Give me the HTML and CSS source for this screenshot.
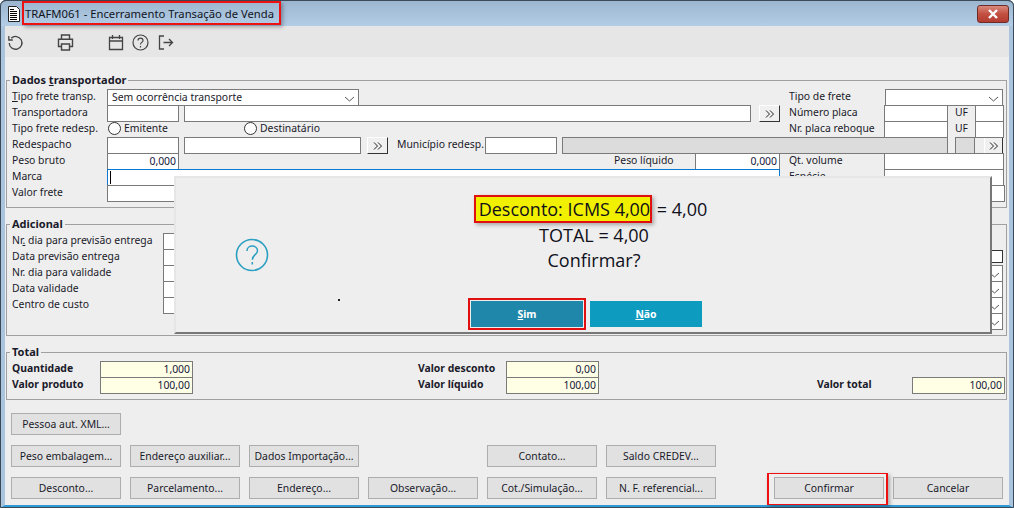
FILE: index.html
```html
<!DOCTYPE html>
<html lang="pt-BR">
<head>
<meta charset="utf-8">
<title>TRAFM061</title>
<link rel="stylesheet" href="styles.css">
</head>
<body>
<div class="window">
  <header class="titlebar">
    <svg class="doc-icon" width="14" height="16" viewBox="0 0 14 16"><path d="M1.500.5h8l3 3v12h-11z" fill="#fff" stroke="#222"/><path d="M3 3.500h4M3 5.500h7M3 7.500h7M3 9.500h7M3 11.500h7M3 13.500h7" stroke="#000"/></svg>
    <h1 class="title">TRAFM061 - Encerramento Transação de Venda</h1>
    <button class="close" aria-label="Fechar"><svg width="12" height="10" viewBox="0 0 12 10"><path d="M2 1l8 8M10 1L2 9" stroke="#fff" stroke-width="2.4"/></svg></button>
  </header>
  <nav class="toolbar">
    <svg class="tool t-undo" width="17" height="17" viewBox="0 0 17 17"><path d="M4.200 4.200A6.400 6.400 0 1 1 2.200 9M1.800 2v4h4" fill="none" stroke="#444" stroke-width="1.3"/></svg>
    <svg class="tool t-print" width="17" height="17" viewBox="0 0 17 17"><path d="M4.500 5V1h8v4M4 12.500H1.500V5.200h14v7.300H13M4.500 10h8v6h-8z" fill="none" stroke="#444" stroke-width="1.400"/></svg>
    <svg class="tool t-cal" width="16" height="17" viewBox="0 0 16 17"><path d="M1.500 3.500h13v12h-13zM1.500 7h13M4.500 1v4M11.500 1v4" fill="none" stroke="#444" stroke-width="1.300"/></svg>
    <svg class="tool t-help" width="17" height="17" viewBox="0 0 17 17"><circle cx="8.500" cy="8.500" r="7.500" fill="none" stroke="#444" stroke-width="1.200"/><path d="M6 6.500c0-3.200 5-3.200 5 0 0 1.900-2.500 1.900-2.500 4M8.500 12v1.400" fill="none" stroke="#444" stroke-width="1.200"/></svg>
    <svg class="tool t-exit" width="16" height="17" viewBox="0 0 16 17"><path d="M6 2H1.500v13H6M5.500 8.500h9M11 5l3.500 3.500L11 12" fill="none" stroke="#444" stroke-width="1.300"/></svg>
  </nav>
  <main class="content">
    <fieldset class="group g-dados">
      <legend>Dados <u>t</u>ransportador</legend>
      <div class="row">
        <label class="lb c-label"><u>T</u>ipo frete transp.</label>
        <div class="in combo w-tipo">Sem ocorrência transporte<svg class="chev" width="11" height="6" viewBox="0 0 11 6"><path d="M1 1l4.500 4L10 1" fill="none" stroke="#555"/></svg></div>
        <label class="lb c-tipofrete">Tipo de frete</label>
        <div class="in combo w-tf"><svg class="chev" width="11" height="6" viewBox="0 0 11 6"><path d="M1 1l4.500 4L10 1" fill="none" stroke="#555"/></svg></div>
      </div>
      <div class="row">
        <label class="lb c-label">Transportadora</label>
        <div class="in w-code"></div>
        <div class="in w-transp"></div>
        <button class="more m-transp" aria-label="Mais"><svg width="10" height="8" viewBox="0 0 10 8"><path d="M1 .5l3.500 3.500L1 7.500M5 .5L8.500 4 5 7.500" fill="none" stroke="#222"/></svg></button>
        <label class="lb c-placa">Número placa</label>
        <div class="in w-placa"></div>
        <span class="uf">UF</span>
        <div class="in w-uf"></div>
      </div>
      <div class="row">
        <label class="lb c-label">Tipo frete redesp.</label>
        <span class="radio"></span><label class="lb c-emit">Emitente</label>
        <span class="radio"></span><label class="lb c-dest">Destinatário</label>
        <label class="lb c-reboque">Nr. placa reboque</label>
        <div class="in w-placa"></div>
        <span class="uf">UF</span>
        <div class="in w-uf"></div>
      </div>
      <div class="row">
        <label class="lb c-label">Redespacho</label>
        <div class="in w-code"></div>
        <div class="in w-redesp"></div>
        <button class="more m-red" aria-label="Mais"><svg width="10" height="8" viewBox="0 0 10 8"><path d="M1 .5l3.500 3.500L1 7.500M5 .5L8.500 4 5 7.500" fill="none" stroke="#222"/></svg></button>
        <label class="lb c-mun">Município redesp.</label>
        <div class="in w-code"></div>
        <div class="in off w-off"></div>
        <div class="in off w-off2"></div>
        <button class="more m-end" aria-label="Mais"><svg width="10" height="8" viewBox="0 0 10 8"><path d="M1 .5l3.500 3.500L1 7.500M5 .5L8.500 4 5 7.500" fill="none" stroke="#222"/></svg></button>
      </div>
      <div class="row">
        <label class="lb c-label">Peso bruto</label>
        <div class="in num w-code">0,000</div>
        <label class="lb c-liq">Peso líquido</label>
        <div class="in num w-liq">0,000</div>
        <label class="lb c-vol">Qt. volume</label>
        <div class="in w-right"></div>
      </div>
      <div class="row">
        <label class="lb c-label">Marca</label>
        <div class="in focus w-marca"><i class="caret"></i></div>
        <label class="lb c-vol">Espécie</label>
        <div class="in w-right"></div>
      </div>
      <div class="row">
        <label class="lb c-label">Valor frete</label>
        <div class="in w-code"></div>
        <div class="in w-right push"></div>
      </div>
    </fieldset>

    <fieldset class="group g-adic">
      <legend>Adicional</legend>
      <div class="row"><label class="lb c-adic">Nr<u>.</u> dia para previsão entrega</label><div class="in w-code"></div></div>
      <div class="row"><label class="lb c-adic">Data previsão entrega</label><div class="in w-code"></div><span class="check push"></span></div>
      <div class="row"><label class="lb c-adic">Nr. dia para validade</label><div class="in w-code"></div><div class="in combo w-mini push"><svg class="chev" width="11" height="6" viewBox="0 0 11 6"><path d="M1 1l4.500 4L10 1" fill="none" stroke="#555"/></svg></div></div>
      <div class="row"><label class="lb c-adic">Data validade</label><div class="in w-code"></div><div class="in combo w-mini push"><svg class="chev" width="11" height="6" viewBox="0 0 11 6"><path d="M1 1l4.500 4L10 1" fill="none" stroke="#555"/></svg></div></div>
      <div class="row"><label class="lb c-adic">Centro de custo</label><div class="in w-code"></div><div class="in combo w-mini push"><svg class="chev" width="11" height="6" viewBox="0 0 11 6"><path d="M1 1l4.500 4L10 1" fill="none" stroke="#555"/></svg></div></div>
      <div class="row"><div class="in combo w-mini push"><svg class="chev" width="11" height="6" viewBox="0 0 11 6"><path d="M1 1l4.500 4L10 1" fill="none" stroke="#555"/></svg></div></div>
    </fieldset>

    <fieldset class="group g-total">
      <legend>Total</legend>
      <div class="row">
        <label class="lb strong c-tot">Quantidade</label>
        <div class="in num cream w-tot">1,000</div>
        <label class="lb strong c-desc">Valor desconto</label>
        <div class="in num cream w-tot">0,00</div>
      </div>
      <div class="row">
        <label class="lb strong c-tot">Valor produto</label>
        <div class="in num cream w-tot">100,00</div>
        <label class="lb strong c-desc">Valor líquido</label>
        <div class="in num cream w-tot">100,00</div>
        <label class="lb strong c-vt">Valor total</label>
        <div class="in num cream w-tot">100,00</div>
      </div>
    </fieldset>

    <section class="actions">
      <button class="btn">Pessoa aut. XML...</button>
      <span class="full"></span>
      <button class="btn">Peso embalagem...</button>
      <button class="btn">Endereço auxiliar...</button>
      <button class="btn">Dados Importação...</button>
      <span></span>
      <button class="btn">Contato...</button>
      <button class="btn">Saldo CREDEV...</button>
      <span class="full2"></span>
      <button class="btn">Desconto...</button>
      <button class="btn">Parcelamento...</button>
      <button class="btn">Endereço...</button>
      <button class="btn">Observação...</button>
      <button class="btn">Cot./Simulação...</button>
      <button class="btn">N. F. referencial...</button>
      <button class="btn b-conf">Confirmar</button>
      <button class="btn">Cancelar</button>
    </section>
  </main>

  <div class="mark m-title"></div>
  <div class="mark m-confirm"></div>

  <div class="dialog" role="dialog">
    <svg class="q-icon" width="34" height="34" viewBox="0 0 34 34"><circle cx="17" cy="17" r="15.500" fill="none" stroke="#2b9fc2" stroke-width="1.600"/><path d="M12 13c0-6.500 10.500-6.500 10.500-.3 0 4-5 4-5.200 9M17.300 24v2.500" fill="none" stroke="#2b9fc2" stroke-width="1.500"/></svg>
    <div class="msg">
      <p class="line1"><mark class="hl">Desconto: ICMS 4,00</mark> = 4,00</p>
      <p>TOTAL = 4,00</p>
      <p>Confirmar?</p>
    </div>
    <i class="dot"></i>
    <div class="dlg-actions">
      <button class="dbtn sim"><u>S</u>im</button>
      <button class="dbtn nao"><u>N</u>ão</button>
    </div>
  </div>
</div>
</body>
</html>
```
FILE: styles.css
```css
* { box-sizing: border-box; }
html, body { margin: 0; height: 100%; overflow: hidden; }
body { width: 1014px; height: 508px; font-family: "Noto Sans", "Liberation Sans", sans-serif; font-size: 10.4px; color: #1a1a2a; }
button { font: inherit; color: inherit; padding: 0; }

.window { position: relative; width: 1014px; height: 508px; background: #eee; border: solid #a9c4dc; border-width: 0 5px 3px 5px; border-bottom-color: #2f9ad6; border-radius: 6px 6px 0 0; outline: 1px solid #3a4a58; outline-offset: -1px; display: flex; flex-direction: column; }

.titlebar { height: 26px; margin: 0 -5px; padding: 0 5px 0 7px; display: flex; align-items: center; background: linear-gradient(#9db6d0, #b3cde6); border-top: 1px solid #2c3a46; border-radius: 6px 6px 0 0; }
.doc-icon { flex: none; }
.title { margin: 0 0 0 4px; font-size: 11.25px; font-weight: 400; color: #10141c; white-space: nowrap; }
.close { margin-left: auto; width: 32px; height: 18px; display: flex; align-items: center; justify-content: center; background: linear-gradient(#d88a7e, #c24f40 50%, #b33c30); border: 1px solid #6e2a26; border-radius: 3px; }

.toolbar { height: 31px; background: #e6e6e6; display: flex; align-items: center; padding: 2px 0 0 2px; margin-bottom: 17px; }
.tool { flex: none; }
.t-print { margin-left: 33px; }
.t-cal { margin-left: 34px; }
.t-help { margin-left: 8px; }
.t-exit { margin-left: 9px; }

.content { display: flex; flex-direction: column; }
.group { margin: 0 0 0 1px; padding: 3px 0 0 5px; width: 1001px; border: 1px solid #a0a0a0; min-width: 0; }
.group legend { font-weight: 700; font-size: 11px; line-height: 12px; padding: 0 2px; margin-left: -2px; }
.g-dados { height: 134px; }
.g-adic { height: 118px; margin-top: 10px; }
.g-total { height: 54px; margin-top: 10px; }

.row { display: flex; height: 16px; align-items: stretch; padding-right: 1px; }
.g-adic .row { padding-right: 3px; }
.lb { display: block; line-height: 15px; white-space: nowrap; flex: none; }
.strong { font-weight: 700; }
.in { flex: none; height: 17px; background: #fff; border: 1px solid #7a7a7a; line-height: 14px; padding: 0 2px; position: relative; white-space: nowrap; }
.num { text-align: right; color: #15153a; }
.cream { background: #ffffe6; }
.off { background: #dcdcdc; }
.focus { border-color: #0a78d0; }
.combo { padding-left: 4px; }
.chev { position: absolute; right: 3px; top: 6px; }
.w-mini .chev { right: 2px; }
.push { margin-left: auto; }
.caret { position: absolute; left: 2px; top: 1px; width: 1px; height: 13px; background: #000; }

.c-label { width: 95px; }
.w-tipo { width: 252px; }
.c-tipofrete { margin-left: 430px; width: 96px; }
.w-tf { width: 118px; }
.w-code { width: 72px; }
.w-transp { width: 567px; margin-left: 5px; }
.m-transp { margin-left: 8px; }
.c-placa { margin-left: 9px; width: 95px; }
.w-placa { width: 64px; }
.uf { width: 27px; text-align: center; line-height: 15px; flex: none; }
.w-uf { width: 29px; }
.radio { flex: none; width: 13px; height: 13px; border: 1px solid #333; border-radius: 50%; background: #fff; margin: 1px 0 0 1px; }
.c-emit { margin-left: 3px; width: 119px; }
.c-dest { margin-left: 3px; width: 529px; }
.c-reboque { width: 95px; }
.w-redesp { width: 177px; margin-left: 5px; }
.m-red { margin-left: 6px; }
.c-mun { margin-left: 9px; width: 88px; }
.w-off { width: 386px; margin-left: 5px; }
.w-off2 { width: 20px; margin-left: 7px; }
.more.m-end { margin-left: 9px; width: 19px; }
.c-liq { margin-left: 435px; width: 81px; }
.w-liq { width: 85px; }
.c-vol { margin-left: 9px; width: 95px; }
.w-right { width: 120px; }
.w-marca { width: 673px; }
.c-adic { width: 151px; }
.check { flex: none; width: 14px; height: 13px; background: #fff; border: 1px solid #333; margin-top: 1px; }
.w-mini { width: 100px; }

.c-tot { width: 88px; }
.w-tot { width: 93px; }
.c-desc { margin-left: 225px; width: 88px; }
.c-vt { margin-left: 218px; width: 95px; }

.more { flex: none; width: 21px; height: 17px; display: flex; align-items: center; justify-content: center; background: #f0f0f0; border: 1px solid; border-color: #fff #333 #333 #fff; }

.actions { display: grid; grid-template-columns: repeat(6, 110px) 40px 110px 110px; column-gap: 9px; row-gap: 10px; margin: 13px 0 0 6px; grid-auto-rows: 22px; }
.actions .full { grid-column: 2 / -1; }
.actions .full2 { grid-column: 7 / -1; }
.btn { background: #e1e1e1; border: 1px solid #adadad; font-size: 10.4px; }
.b-conf { grid-column: 8; }
.actions > .btn:last-child { grid-column: 9; }

.mark { position: absolute; border: 2px solid #ee1111; box-shadow: 2px 2px 4px rgba(0,0,0,.3); pointer-events: none; }
.m-title { left: 17px; top: 1px; width: 259px; height: 24px; }
.m-confirm { left: 762px; top: 473px; width: 121px; height: 32px; border-width: 1px 2px; z-index: 1; }

.dialog { position: absolute; left: 169px; top: 176px; width: 818px; height: 158px; background: #eee; border: 2px solid #e6e6e6; border-right-color: #777; border-bottom-color: #777; display: flex; flex-direction: column; z-index: 2; }
.q-icon { position: absolute; left: 59px; top: 60px; }
.msg { margin: 19px 0 0 200px; width: 436px; font-family: "Open Sans", "Noto Sans", sans-serif; font-size: 18px; line-height: 25.5px; text-align: center; color: #10101a; }
.msg p { margin: 0; }
.msg .line1 { padding-right: 7px; }
.hl { background: #f0f000; color: inherit; padding: 0 0 0 3px; border: 2px solid #e01010; box-shadow: 2px 2px 4px rgba(0,0,0,.3); }
.dot { position: absolute; left: 162px; top: 121px; width: 2px; height: 2px; background: #222; }
.dlg-actions { display: flex; gap: 7px; margin: auto 0 5px 295px; }
.dbtn { width: 112px; height: 26px; border: 0; color: #fff; font-weight: 700; font-size: 10.4px; }
.sim { background: #1f88aa; outline: 2px solid #e01010; outline-offset: 1px; }
.nao { background: #0e9bc0; }
```
